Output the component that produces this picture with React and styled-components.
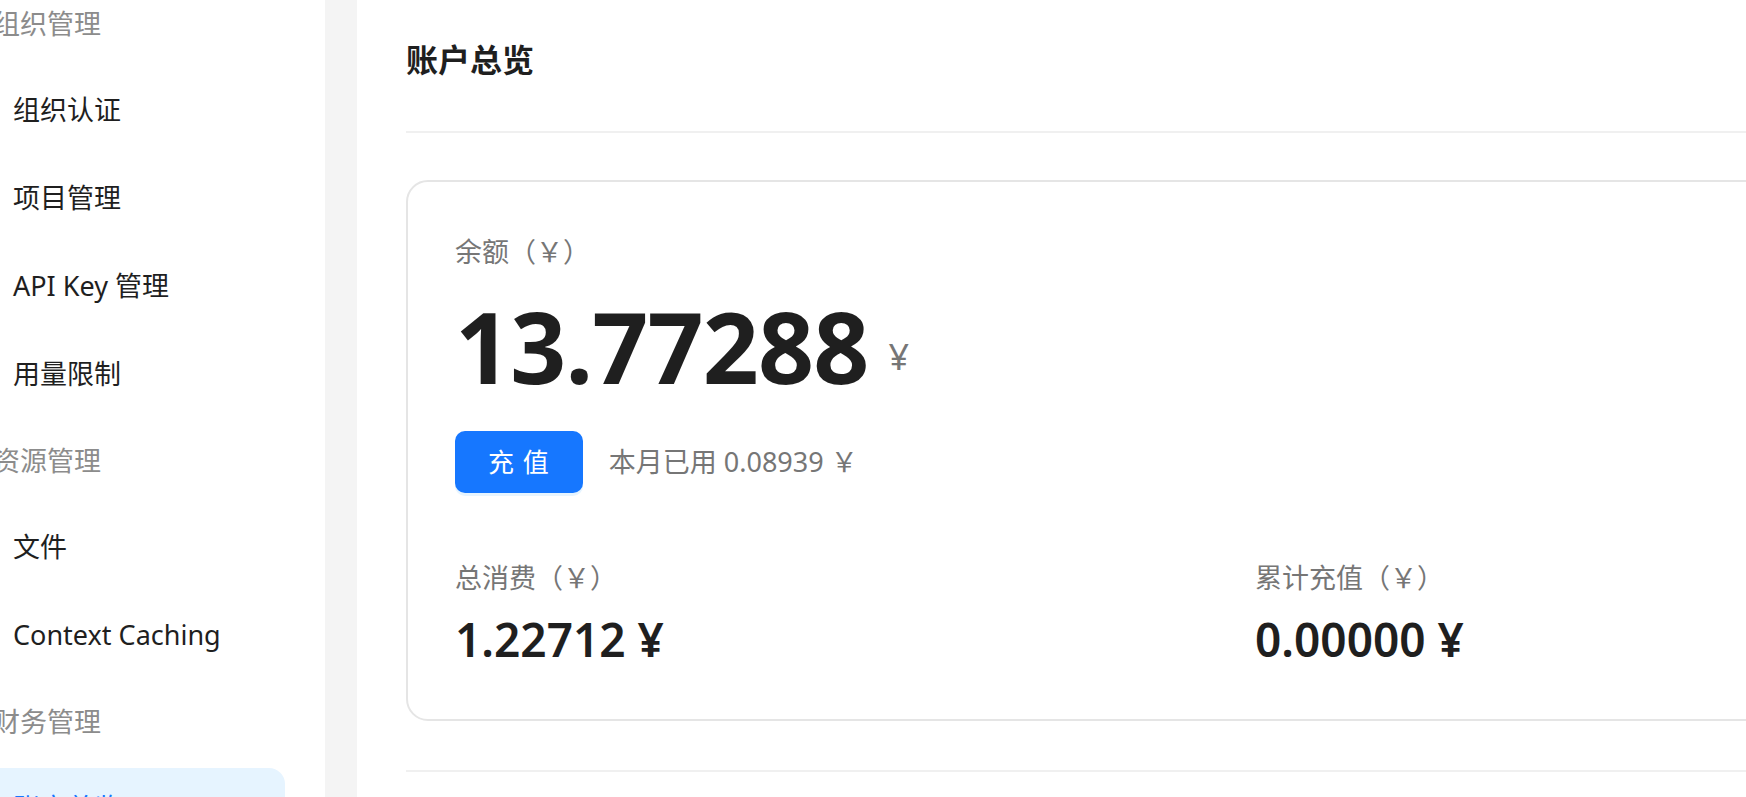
import React from "react";
import styled, { createGlobalStyle } from "styled-components";

const GlobalStyle = createGlobalStyle`
  html, body {
    margin: 0;
    padding: 0;
    overflow: hidden;
    background: #ffffff;
  }
  body {
    font-family: "Noto Sans", "Noto Sans CJK SC", sans-serif;
    color: #1f1f1f;
  }
  * { box-sizing: border-box; }
`;

const Layout = styled.div`
  display: grid;
  grid-template-columns: 325px 1fr;
  column-gap: 32px;
  height: 100vh;
  background: #f4f4f4;
  overflow: hidden;
`;

const Sidebar = styled.aside`
  background: #ffffff;
  overflow: hidden;
`;

const Nav = styled.nav`
  display: flex;
  flex-direction: column;
  margin: -19px 40px 0 -20px;
`;

const GroupLabel = styled.div`
  height: 85px;
  display: flex;
  align-items: center;
  padding-left: 13px;
  font-size: 27px;
  line-height: 1.4;
  color: #8c8c8c;
`;

const NavItem = styled.div`
  height: 80px;
  margin: 4px 0;
  display: flex;
  align-items: center;
  padding-left: 33px;
  border-radius: 16px;
  font-size: 27px;
  line-height: 1.4;
  color: ${(p) => (p.$active ? "#1677ff" : "#1f1f1f")};
  background: ${(p) => (p.$active ? "#e6f4ff" : "transparent")};
`;

const Main = styled.main`
  background: #ffffff;
  overflow: hidden;
  padding-left: 49px;
`;

const Content = styled.div`
  width: 1700px;
`;

const Header = styled.header`
  padding: 38px 0 49px;
  border-bottom: 2px solid #f0f0f0;
`;

const Title = styled.h1`
  margin: 0;
  font-size: 32px;
  line-height: 44px;
  font-weight: 700;
  color: #1f1f1f;
`;

const Card = styled.section`
  margin-top: 47px;
  border: 2px solid #e5e5e5;
  border-radius: 22px;
  padding: 52px 47px 49px;
`;

const StatLabel = styled.div`
  font-size: 27px;
  line-height: 36px;
  color: #767676;
`;

const BigAmount = styled.div`
  margin-top: 17px;
  font-size: 98px;
  line-height: 118px;
  font-weight: 700;
  color: #1f1f1f;
  letter-spacing: -0.8px;
`;

const BigUnit = styled.span`
  margin-left: 20px;
  font-size: 36px;
  line-height: 1;
  font-weight: 400;
  color: #767676;
  letter-spacing: 0;
  vertical-align: 14px;
`;

const ActionRow = styled.div`
  margin-top: 26px;
  display: flex;
  align-items: center;
  gap: 26px;
`;

const PrimaryButton = styled.button`
  height: 62px;
  padding: 0 33px;
  border: none;
  border-radius: 10px;
  background: #1677ff;
  color: #ffffff;
  font-family: inherit;
  font-size: 26px;
  line-height: 1;
  letter-spacing: 1px;
  box-shadow: 0 3px 0 rgba(5, 145, 255, 0.1);
  cursor: pointer;
`;

const Hint = styled.span`
  font-size: 27px;
  line-height: 36px;
  color: #767676;
`;

const StatGrid = styled.div`
  margin-top: 67px;
  display: grid;
  grid-template-columns: 800px 800px;
`;

const Stat = styled.div`
  display: flex;
  flex-direction: column;
`;

const StatValue = styled.div`
  margin-top: 12px;
  font-size: 46px;
  line-height: 62px;
  font-weight: 600;
  color: #1f1f1f;
`;

const SectionDivider = styled.hr`
  margin: 49px 0 0;
  border: none;
  border-top: 2px solid #f0f0f0;
`;

const navData = [
  { type: "label", text: "组织管理" },
  { type: "item", text: "组织认证" },
  { type: "item", text: "项目管理" },
  { type: "item", text: "API Key 管理" },
  { type: "item", text: "用量限制" },
  { type: "label", text: "资源管理" },
  { type: "item", text: "文件" },
  { type: "item", text: "Context Caching" },
  { type: "label", text: "财务管理" },
  { type: "item", text: "账户总览", active: true },
];

export default function App() {
  return (
    <>
      <GlobalStyle />
      <Layout>
        <Sidebar>
          <Nav>
            {navData.map((n) =>
              n.type === "label" ? (
                <GroupLabel key={n.text}>{n.text}</GroupLabel>
              ) : (
                <NavItem key={n.text} $active={n.active}>
                  {n.text}
                </NavItem>
              )
            )}
          </Nav>
        </Sidebar>
        <Main>
          <Content>
            <Header>
              <Title>账户总览</Title>
            </Header>
            <Card>
              <StatLabel>余额（￥）</StatLabel>
              <BigAmount>
                13.77288<BigUnit>¥</BigUnit>
              </BigAmount>
              <ActionRow>
                <PrimaryButton>充 值</PrimaryButton>
                <Hint>本月已用 0.08939 ￥</Hint>
              </ActionRow>
              <StatGrid>
                <Stat>
                  <StatLabel>总消费（￥）</StatLabel>
                  <StatValue>1.22712 ¥</StatValue>
                </Stat>
                <Stat>
                  <StatLabel>累计充值（￥）</StatLabel>
                  <StatValue>0.00000 ¥</StatValue>
                </Stat>
              </StatGrid>
            </Card>
            <SectionDivider />
          </Content>
        </Main>
      </Layout>
    </>
  );
}
